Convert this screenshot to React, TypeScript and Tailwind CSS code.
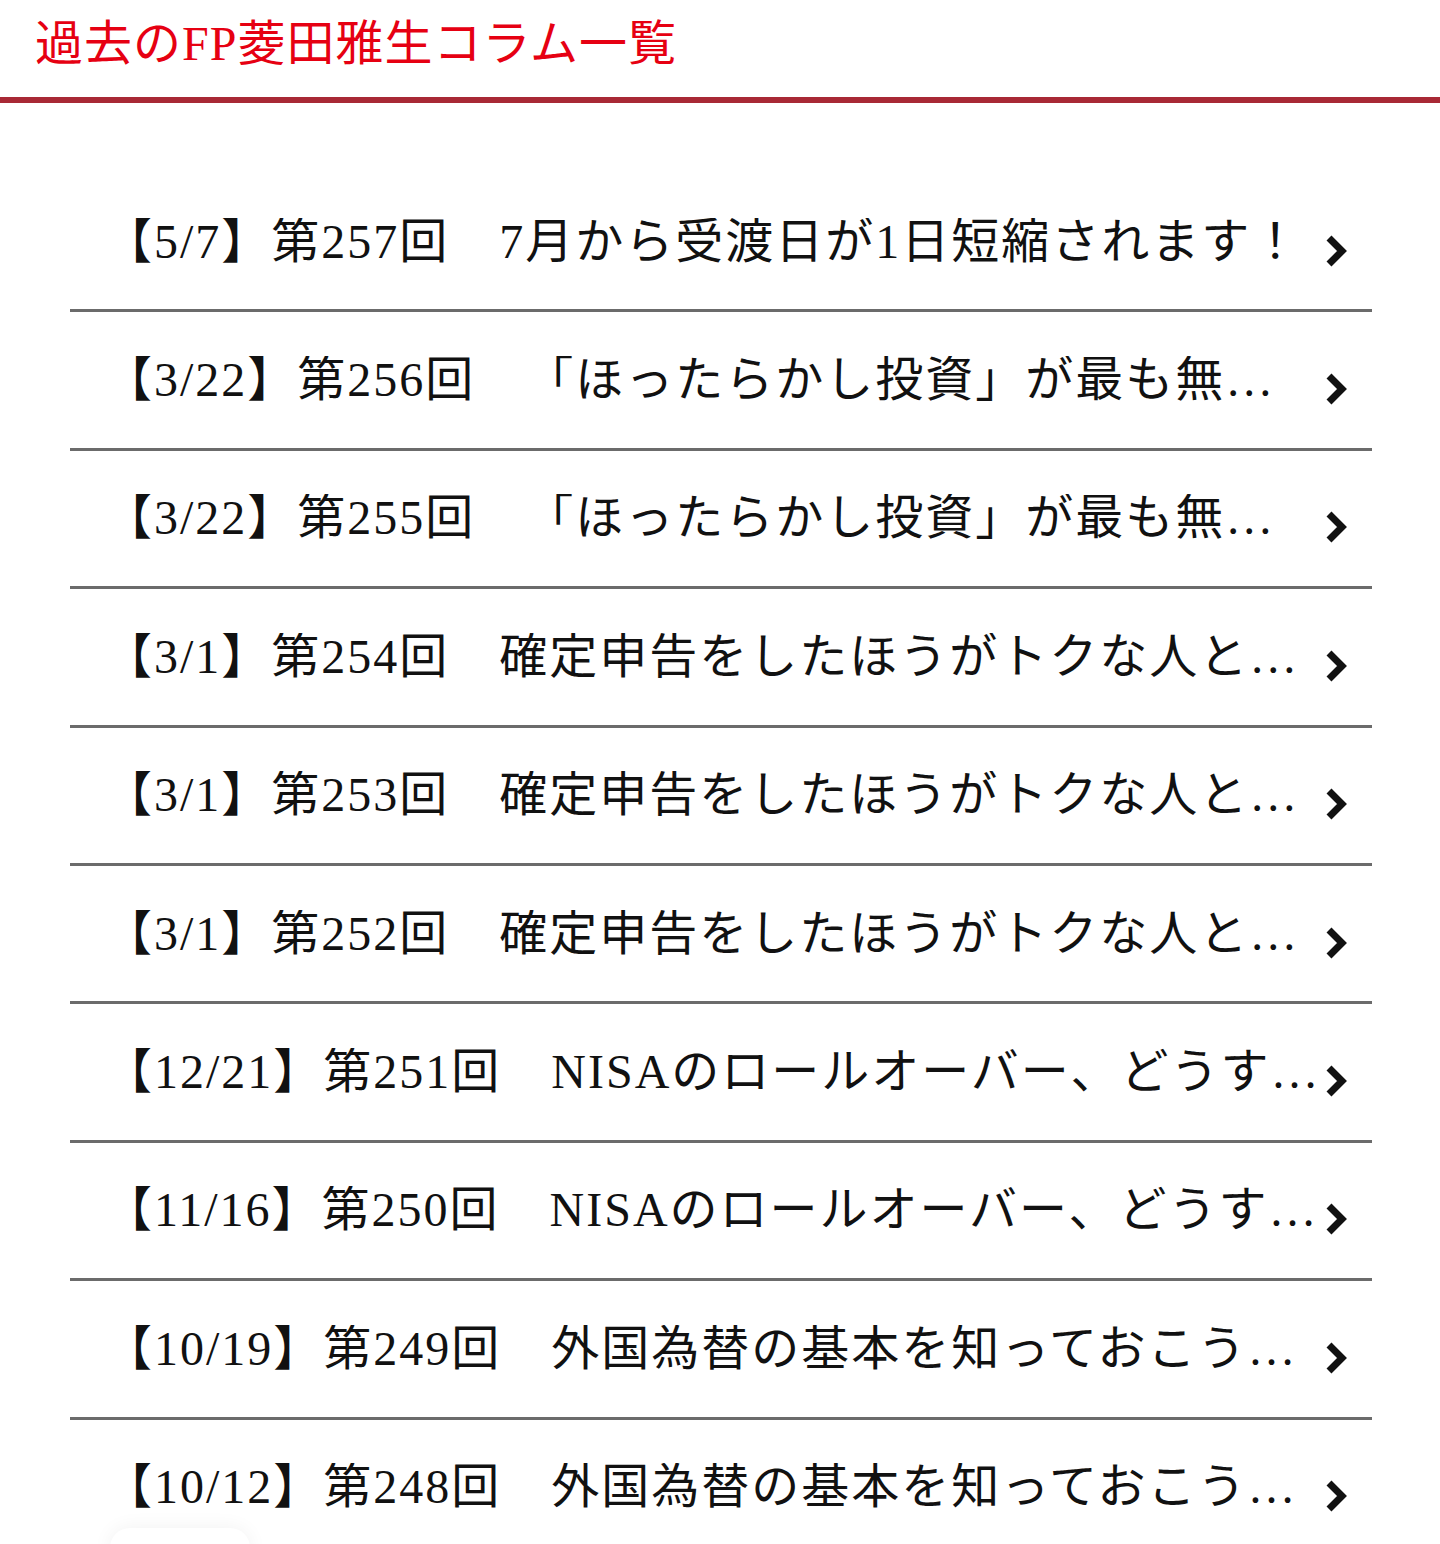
const columns = [
  "【5/7】第257回　7月から受渡日が1日短縮されます！",
  "【3/22】第256回　「ほったらかし投資」が最も無理なく続けられる理由",
  "【3/22】第255回　「ほったらかし投資」が最も無理なく続けられる理由",
  "【3/1】第254回　確定申告をしたほうがトクな人とは？",
  "【3/1】第253回　確定申告をしたほうがトクな人とは？",
  "【3/1】第252回　確定申告をしたほうがトクな人とは？",
  "【12/21】第251回　NISAのロールオーバー、どうすればいい？",
  "【11/16】第250回　NISAのロールオーバー、どうすればいい？",
  "【10/19】第249回　外国為替の基本を知っておこう（後編）",
  "【10/12】第248回　外国為替の基本を知っておこう（前編）",
];

function Chevron() {
  return (
    <svg width="24" height="34" viewBox="0 0 24 34" className="shrink-0 mt-[18px]">
      <polyline points="5,4 18,17 5,30" fill="none" stroke="#111" strokeWidth="7" />
    </svg>
  );
}

function ColumnRow({ title }: { title: string }) {
  return (
    <a
      href="#"
      className="flex items-center h-[138.4px] pl-[34px] pr-[24px] border-b-[3px] border-[#6b6b6b] text-[#111]"
    >
      <span className="w-[1218.5px] shrink-0 truncate leading-none">{title}</span>
      <span className="ml-auto flex">
        <Chevron />
      </span>
    </a>
  );
}

export default function App() {
  return (
    <div
      className="relative bg-white h-[1544px] overflow-hidden [text-spacing-trim:space-all]"
      style={{ fontFamily: '"Liberation Serif", "Noto Sans CJK JP", serif' }}
    >
      <header className="h-[103px] border-b-[6px] border-[#a82935] pl-[35px] flex items-center">
        <h2 className="text-[48px] leading-none tracking-[1px] text-[#e60012] -mt-[10px]">
          過去のFP菱田雅生コラム一覧
        </h2>
      </header>
      <ul className="ml-[70px] w-[1302px] mt-[71px] text-[48px] tracking-[2px]">
        {columns.map((c) => (
          <li key={c}>
            <ColumnRow title={c} />
          </li>
        ))}
      </ul>
      <div className="absolute left-[110px] top-[1528px] w-[140px] h-[40px] rounded-full shadow-[0_0_20px_rgba(0,0,0,0.06)]" />
    </div>
  );
}
